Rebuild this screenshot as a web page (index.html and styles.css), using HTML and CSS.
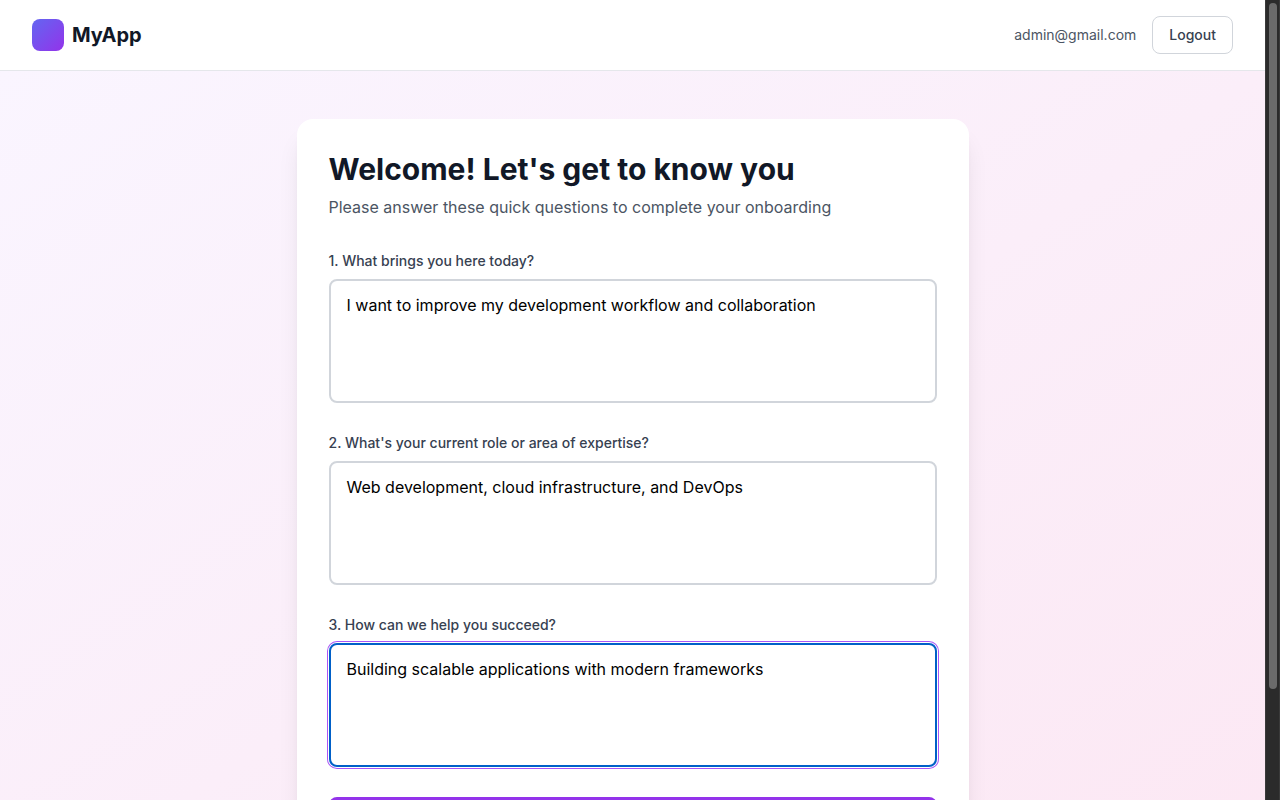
FILE: index.html
```html
<!DOCTYPE html>
<html lang="en">
<head>
<meta charset="utf-8">
<title>MyApp</title>
<link rel="stylesheet" href="styles.css">
</head>
<body>
<div class="window">
  <div class="page">
    <header class="header">
      <div class="brand"><span class="logo"></span><span class="brand-name">MyApp</span></div>
      <div class="account"><span class="email">admin@gmail.com</span><button class="logout">Logout</button></div>
    </header>
    <main class="main">
      <form class="card">
        <h1 class="title">Welcome! Let's get to know you</h1>
        <p class="subtitle">Please answer these quick questions to complete your onboarding</p>
        <div class="questions">
          <div class="question">
            <label class="label" for="q1">1. What brings you here today?</label>
            <textarea class="answer" id="q1">I want to improve my development workflow and collaboration</textarea>
          </div>
          <div class="question">
            <label class="label" for="q2">2. What's your current role or area of expertise?</label>
            <textarea class="answer" id="q2">Web development, cloud infrastructure, and DevOps</textarea>
          </div>
          <div class="question">
            <label class="label" for="q3">3. How can we help you succeed?</label>
            <textarea class="answer answer-active" id="q3">Building scalable applications with modern frameworks</textarea>
          </div>
        </div>
        <button class="submit" type="button" aria-label="Submit"></button>
      </form>
    </main>
  </div>
  <div class="scrollbar"><div class="thumb"></div></div>
</div>
</body>
</html>
```
FILE: styles.css
```css
* { box-sizing: border-box; }
body { margin: 0; overflow: hidden; font-family: Inter, sans-serif; font-size: 16px; line-height: 24px; }
.window { display: flex; height: 800px; overflow: hidden; }
.page { flex: 1; height: 925px; }
.header { display: flex; justify-content: space-between; align-items: center; height: 71px; padding: 0 32px; background: #fff; border-bottom: 1px solid #e5e7eb; }
.brand { display: flex; align-items: center; gap: 8px; }
.logo { width: 32px; height: 32px; border-radius: 8px; background: linear-gradient(to bottom right, #6366f1, #9333ea); }
.brand-name { font-size: 20px; line-height: 28px; font-weight: 700; color: #111827; }
.account { display: flex; align-items: center; gap: 16px; }
.email { font-size: 14px; line-height: 20px; color: #4b5563; }
.logout { height: 38px; padding: 0 16px; border: 1px solid #d1d5db; border-radius: 8px; background: #fff; font: 500 14px/20px Inter, sans-serif; color: #374151; }
.main { height: 854px; padding: 48px 16px; background: linear-gradient(to bottom right, #faf5ff, #fce7f3); }
.card { width: 672px; margin: 0 auto; padding: 32px; border-radius: 16px; background: #fff; box-shadow: 0 20px 25px -5px rgba(0, 0, 0, .1), 0 8px 10px -6px rgba(0, 0, 0, .1); }
.title { margin: 0 0 8px; font-size: 30px; line-height: 36px; font-weight: 700; color: #111827; }
.subtitle { margin: 0 0 32px; color: #4b5563; }
.questions { display: flex; flex-direction: column; gap: 30px; }
.question { display: flex; flex-direction: column; gap: 8px; }
.label { font-size: 14px; line-height: 20px; font-weight: 500; color: #374151; }
.answer { display: block; width: 100%; height: 124px; margin: 0; padding: 12px 16px; border: 2px solid #d1d5db; border-radius: 8px; background: #fff; font: 400 16px/24px Inter, sans-serif; color: #000; resize: none; outline: none; }
.answer-active { border-color: #0060c8; box-shadow: 0 0 0 1px #fff, 0 0 0 2px #a855f7; }
.submit { display: block; width: 100%; height: 48px; margin-top: 30px; border: 0; border-radius: 8px; background: #9333ea; }
.scrollbar { width: 15px; padding: 3px 3px 0 4px; background: #2b2b2b; border-left: 1px solid #3a3a3a; border-right: 1px solid #3a3a3a; }
.thumb { width: 8px; height: 686px; margin-left: -1px; border-radius: 4px; background: #6b6b6b; }
```
